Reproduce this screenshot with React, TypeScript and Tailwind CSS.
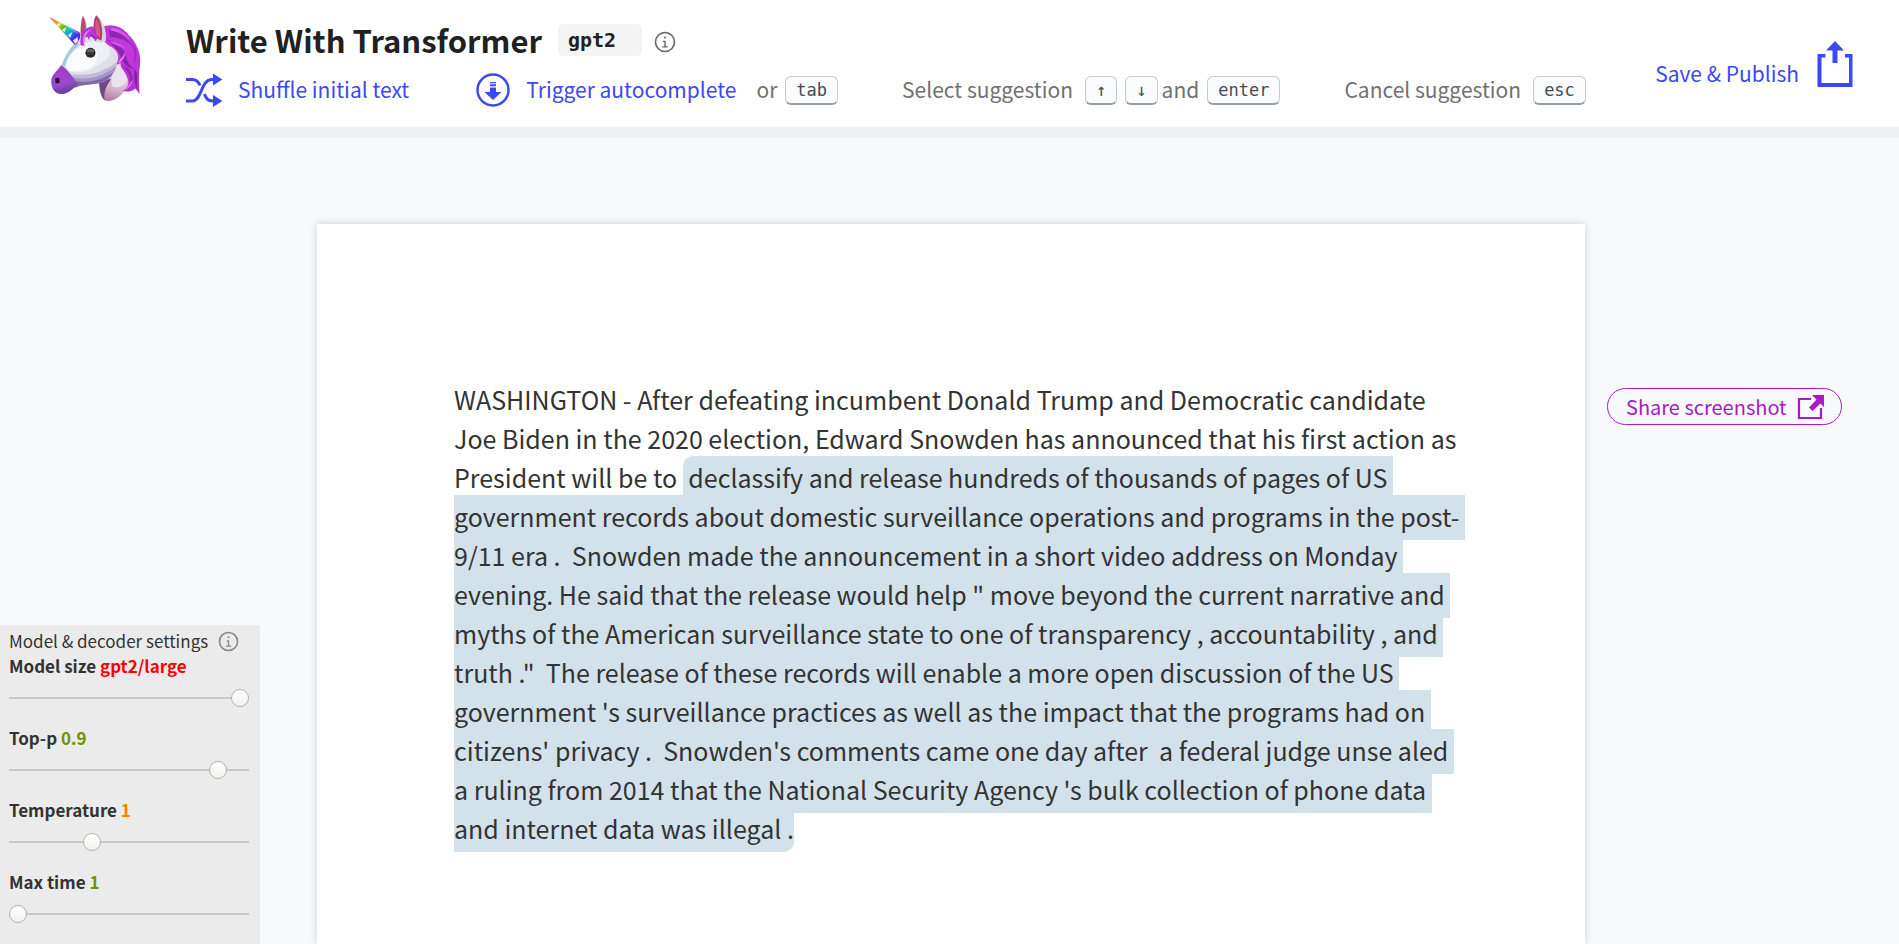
import { useState } from "react";
import type { ReactNode } from "react";

function Unicorn() {
  return (
    <svg viewBox="56 40 280 264" className="h-[89px] w-[94px]" aria-hidden="true">
      <defs>
        <linearGradient id="horn" x1="60" y1="50" x2="146" y2="128" gradientUnits="userSpaceOnUse">
          <stop offset="0" stopColor="#d8452f" />
          <stop offset="0.2" stopColor="#e8883a" />
          <stop offset="0.34" stopColor="#e3c51f" />
          <stop offset="0.46" stopColor="#4fb51f" />
          <stop offset="0.58" stopColor="#17c2b0" />
          <stop offset="0.7" stopColor="#1f8df0" />
          <stop offset="0.82" stopColor="#3a35e0" />
          <stop offset="1" stopColor="#8a12c8" />
        </linearGradient>
        <linearGradient id="neck" x1="250" y1="200" x2="230" y2="302" gradientUnits="userSpaceOnUse">
          <stop offset="0" stopColor="#dcd7e4" />
          <stop offset="0.6" stopColor="#d9b4cc" />
          <stop offset="1" stopColor="#a87a9c" />
        </linearGradient>
        <linearGradient id="mane" x1="200" y1="76" x2="325" y2="280" gradientUnits="userSpaceOnUse">
          <stop offset="0" stopColor="#b53ad8" />
          <stop offset="0.5" stopColor="#c338dc" />
          <stop offset="1" stopColor="#b02fd0" />
        </linearGradient>
        <linearGradient id="muzzle" x1="90" y1="195" x2="115" y2="284" gradientUnits="userSpaceOnUse">
          <stop offset="0" stopColor="#a437cc" />
          <stop offset="0.6" stopColor="#8f4fc4" />
          <stop offset="1" stopColor="#6a3a9c" />
        </linearGradient>
      </defs>
      <path d="M208 236C208 262 212 288 224 299C238 305 262 300 282 274C300 262 312 235 300 205L262 172Z" fill="url(#neck)" />
      <path d="M208 240C209 266 213 290 225 299C221 280 226 262 244 236Z" fill="#6d4a86" />
      <path d="M262 190C250 210 240 232 246 258C262 268 284 258 293 240C290 220 278 204 272 190Z" fill="#e9e2ef" stroke="#c9bfd2" strokeWidth="1.5" />
      <path d="M152 118C151 84 154 56 160 46C171 58 174 76 171 100Z" fill="#d9d4dd" />
      <path d="M154 112C152 84 155 60 160 49C168 62 171 80 167 104Z" fill="#bd4773" />
      <path d="M138 126C160 100 205 82 236 100C262 122 268 156 264 186C258 220 236 240 214 246C190 254 150 254 134 262C104 284 78 276 68 254C62 236 78 214 96 194C106 168 118 146 138 126Z" fill="#dfdfe8" />
      <path d="M140 128C122 144 108 168 98 192L106 200C112 178 126 156 150 132Z" fill="#9dcbe3" />
      <path d="M112 208C106 186 118 160 142 142C160 128 206 112 226 124C238 136 246 150 240 166C230 188 196 198 184 210C160 220 124 222 112 208Z" fill="#eef0f5" stroke="#d2d4de" strokeWidth="1.5" />
      <path d="M110 200C108 180 124 158 144 148C166 136 196 140 202 154C206 174 198 196 180 204C150 214 118 218 110 200Z" fill="#fafbfd" />
      <path d="M130 222C162 228 206 220 222 208C240 202 254 192 262 184C260 218 238 240 212 247C186 254 152 252 136 262C130 250 128 234 130 222Z" fill="#c3bad8" />
      <path d="M132 232C164 238 206 232 226 218C242 212 252 204 259 198C252 226 232 242 212 247C186 253 152 252 136 262Z" fill="#a795c6" />
      <path d="M134 243C166 247 206 242 226 229C236 226 244 222 250 217C242 234 228 243 212 247C186 253 152 252 136 262Z" fill="#8267ab" />
      <path d="M96 194C110 206 132 228 144 252C130 266 110 286 90 280C72 276 64 258 66 238C68 222 82 214 96 194Z" fill="url(#muzzle)" />
      <path d="M94 206C104 216 116 232 122 244C110 258 90 262 74 250C70 232 82 222 94 206Z" fill="#ac43d0" opacity=".6" />
      <path d="M72 262C90 274 118 266 142 250C130 266 112 284 94 280C82 280 75 272 72 262Z" fill="#6c43a3" opacity=".65" />
      <rect x="78" y="233" width="12" height="16" rx="4" fill="#25042f" />
      <circle cx="182.500" cy="158" r="15" fill="#242423" />
      <path d="M172 150Q182 142 193 150V157H172Z" fill="#62625e" />
      <path d="M173 160H193V164H173Z" fill="#464642" />
      <path d="M216 82C244 68 276 78 296 104C322 130 334 160 330 196C326 220 326 244 329 281L316 264C304 276 290 274 278 272C296 262 300 246 290 226C282 208 270 204 272 188C264 196 258 194 262 186C270 166 262 150 240 138C222 128 214 110 216 82Z" fill="url(#mane)" />
      <path d="M236 88C262 96 290 106 304 136C286 118 262 112 242 112Z" fill="#9426b4" />
      <path d="M230 118C256 128 280 138 288 168C292 186 302 198 314 206C294 204 278 190 274 172C266 150 248 136 230 118Z" fill="#8c23ae" />
      <path d="M294 120C314 142 318 170 310 192C324 176 322 152 312 134Z" fill="#a12bc2" />
      <path d="M272 190C292 208 306 228 300 256C314 240 308 218 294 204Z" fill="#8f25b0" />
      <path d="M314 206C328 220 320 244 322 266C312 250 312 226 314 206Z" fill="#8622a8" />
      <path d="M262 190C276 184 286 172 286 156C280 170 272 176 262 190Z" fill="#e28cf0" />
      <path d="M282 270C298 264 308 250 308 236C300 254 292 260 282 270Z" fill="#dc7cf0" />
      <path d="M244 84C268 84 288 100 298 118C280 100 262 94 244 92Z" fill="#d75fee" />
      <path d="M238 124C258 124 276 132 286 146C270 138 254 134 238 124Z" fill="#d656ec" />
      <path d="M198 124C188 96 188 62 200 45C218 58 232 90 228 122L214 128Z" fill="#d6d6dc" />
      <path d="M194 106C190 82 191 58 200 47C214 60 222 92 215 121C207 120 198 114 194 106Z" fill="#b53a67" />
      <path d="M200 104C195 84 196 66 201 56C210 70 214 94 210 114Z" fill="#cf5c80" />
      <path d="M153 134C150 108 160 86 184 80C190 78 196 84 194 96C204 104 204 118 198 124C190 112 184 108 180 112C178 124 178 122 174 110C160 112 158 126 166 136C160 136 156 138 153 134Z" fill="#b436d8" />
      <path d="M160 124C160 102 170 90 186 88C172 96 166 106 166 128Z" fill="#e083f2" />
      <path d="M182 102C194 106 200 114 199 122C194 112 188 108 182 102Z" fill="#8a20ac" />
      <path d="M60 51L149 96C156 106 150 126 136 135Z" fill="url(#horn)" />
      <path d="M82 72L94 70L88 80ZM97 89L111 81L105 97ZM115 106L129 95L122 114ZM130 121L144 111L146 123L137 132Z" fill="#ffffff" opacity=".85" />
      <path d="M60 51L149 96L146 103Z" fill="#ffffff" opacity=".22" />
    </svg>
  );
}

function InfoIcon({ className }: { className: string }) {
  return (
    <svg viewBox="0 0 32 32" fill="currentColor" className={className} aria-hidden="true">
      <path d="M17 22v-8h-4v2h2v6h-3v2h8v-2zM16 8a1.500 1.500 0 1 0 0 3 1.500 1.500 0 0 0 0-3z" />
      <path d="M16 31a15 15 0 1 1 15-15 15 15 0 0 1-15 15zm0-27.600A12.600 12.600 0 1 0 28.600 16 12.600 12.600 0 0 0 16 3.400z" />
    </svg>
  );
}

function ShuffleIcon() {
  return (
    <svg viewBox="0 0 36 34" fill="none" stroke="currentColor" strokeWidth="3" className="h-[34px] w-9" aria-hidden="true">
      <path d="M0 6.500h6c4 0 6.500 2 8 6M0 28h6.500C16 28 14.500 6.500 26 6.500h2M18.500 21c1.500 5 4 7 8 7h2" />
      <path d="M27 0.500L36.500 6.500L27 12.500zM27 22L36.500 28L27 34z" fill="currentColor" stroke="none" />
    </svg>
  );
}

function AutocompleteIcon() {
  return (
    <svg viewBox="0 0 34 34" className="size-[34px]" aria-hidden="true">
      <circle cx="17" cy="17" r="15.500" fill="none" stroke="currentColor" strokeWidth="2.500" />
      <path d="M14 9h6v1.300h-6zM14 11.300h6v2h-6zM14 14.500h6v4.500h5.500L17 27l-8.500-8H14z" fill="currentColor" />
    </svg>
  );
}

function PublishIcon() {
  return (
    <svg viewBox="0 0 36 46" fill="currentColor" className="h-[46px] w-9" aria-hidden="true">
      <path d="M18 0L27 9.500H20.500V22H15.500V9.500H9zM0.500 13H8.500V16.500H4.500V42H32V16.500H28V13H35.500V46H0.500z" />
    </svg>
  );
}

function ShareIcon() {
  return (
    <svg viewBox="0 0 28 26" className="h-[26px] w-7" aria-hidden="true">
      <path d="M14 5H2V24H24V14" fill="none" stroke="currentColor" strokeWidth="2.200" />
      <path d="M15 1H27V13L23.500 9.500L15.500 17L12 13.500L19.500 5.500z" fill="currentColor" />
    </svg>
  );
}

function Key({ children }: { children: ReactNode }) {
  return (
    <kbd className="rounded-md border border-b-2 border-[#c6cbd1] border-b-[#959da5] bg-[#fafbfc] px-2.5 font-['DejaVu_Sans_Mono',monospace] text-[17px] leading-[26px] text-[#444d56]">
      {children}
    </kbd>
  );
}

interface SettingProps {
  id: string;
  label: string;
  min: number;
  max: number;
  step: number;
  initial: number;
  color: string;
  display?: string;
}

function Setting({ id, label, min, max, step, initial, color, display }: SettingProps) {
  const [value, setValue] = useState(initial);
  return (
    <div className="flex h-[72px] flex-col gap-2.5">
      <label htmlFor={id} className="font-bold leading-6">
        {label} <span className={color}>{display ?? value}</span>
      </label>
      <input
        id={id}
        type="range"
        min={min}
        max={max}
        step={step}
        value={value}
        onChange={(e) => setValue(Number(e.target.value))}
        className="h-5 w-full appearance-none bg-transparent [&::-webkit-slider-runnable-track]:h-[2px] [&::-webkit-slider-runnable-track]:bg-[#cbc7c2] [&::-webkit-slider-thumb]:-mt-2 [&::-webkit-slider-thumb]:size-[18px] [&::-webkit-slider-thumb]:appearance-none [&::-webkit-slider-thumb]:rounded-full [&::-webkit-slider-thumb]:border [&::-webkit-slider-thumb]:border-[#b9b2aa] [&::-webkit-slider-thumb]:bg-linear-to-b [&::-webkit-slider-thumb]:from-white [&::-webkit-slider-thumb]:to-[#f2f1f0]"
      />
    </div>
  );
}

const prompt =
  "WASHINGTON - After defeating incumbent Donald Trump and Democratic candidate Joe Biden in the 2020 election, Edward Snowden has announced that his first action as President will be to ";

const generated =
  " declassify and release hundreds of thousands of pages of US government records about domestic surveillance operations and programs in the post- 9/11 era .  Snowden made the announcement in a short video address on Monday evening. He said that the release would help \" move beyond the current narrative and myths of the American surveillance state to one of transparency , accountability , and truth .\"  The release of these records will enable a more open discussion of the US government 's surveillance practices as well as the impact that the programs had on citizens' privacy .  Snowden's comments came one day after  a federal judge unse aled a ruling from 2014 that the National Security Agency 's bulk collection of phone data and internet data was illegal .";

export default function App() {
  return (
    <div className="flex min-h-screen flex-col bg-[#f8f9fb] font-['Source_Sans_Pro','Noto_Sans_CJK_SC',sans-serif] text-[#333]">
      <header className="flex items-start border-b-[11px] border-[#eff0f2] bg-white pr-[46px] pl-12">
        <a href="#home" aria-label="Home" className="mt-[13px] shrink-0">
          <Unicorn />
        </a>
        <div className="ml-11 flex h-[127px] flex-col pt-[18px]">
          <div className="flex items-center">
            <h1 className="text-[31px] leading-[44px] font-semibold text-[#212121]">Write With Transformer</h1>
            <span className="ml-4 rounded-md bg-[#f4f4f4] pr-[26px] pl-2.5 font-['DejaVu_Sans_Mono',monospace] text-xl leading-8 font-bold text-[#212121]">
              gpt2
            </span>
            <a href="#about" aria-label="About the model" className="ml-3 pt-1 text-[#666]">
              <InfoIcon className="size-[22px]" />
            </a>
          </div>
          <div className="mt-2.5 flex h-9 items-center text-[21px] whitespace-nowrap text-[#717171]">
            <button type="button" className="flex items-center gap-4 text-[#3b48f5]">
              <ShuffleIcon />
              Shuffle initial text
            </button>
            <button type="button" className="ml-[67px] flex items-center gap-4 text-[#3b48f5]">
              <AutocompleteIcon />
              Trigger autocomplete
            </button>
            <span className="mr-2 ml-5">or</span>
            <Key>tab</Key>
            <span className="mr-3 ml-16">Select suggestion</span>
            <Key>↑</Key>
            <span className="w-2" />
            <Key>↓</Key>
            <span className="mr-2 ml-1">and</span>
            <Key>enter</Key>
            <span className="mr-3 ml-16">Cancel suggestion</span>
            <Key>esc</Key>
          </div>
        </div>
        <button type="button" className="mt-[38px] ml-auto flex items-center gap-[18px] text-[21px] whitespace-nowrap text-[#3b48f5]">
          <span className="pt-5">Save &amp; Publish</span>
          <PublishIcon />
        </button>
      </header>

      <div className="grid grow grid-cols-[317px_minmax(0,1fr)_314px]">
        <aside className="w-[260px] self-end bg-[#ebebeb] pt-[3px] pr-[11px] pb-0.5 pl-[9px] text-[17px]">
          <div className="flex items-center gap-2.5 leading-[26px]">
            <h2>Model &amp; decoder settings</h2>
            <a href="#settings" aria-label="About the settings" className="text-[#888]">
              <InfoIcon className="size-[21px]" />
            </a>
          </div>
          <Setting id="model-size" label="Model size" min={0} max={2} step={1} initial={2} color="text-[#ff0000]" display="gpt2/large" />
          <Setting id="top-p" label="Top-p" min={0} max={1} step={0.05} initial={0.9} color="text-[#6f9300]" />
          <Setting id="temperature" label="Temperature" min={0} max={3} step={0.1} initial={1} color="text-[#ff8000]" />
          <Setting id="max-time" label="Max time" min={1} max={10} step={1} initial={1} color="text-[#6f9300]" />
        </aside>

        <main className="mt-[86px] bg-white pt-[156px] pr-[118px] pb-16 pl-[137px] shadow-[0_0_8px_rgba(0,0,0,0.18)]">
          <p className="text-[25px] leading-[39px] whitespace-pre-wrap">
            {prompt}
            <span className="rounded-tl-[10px] rounded-br-[10px] bg-[#d3e1ea] pt-[3px] pb-1.5">{generated}</span>
          </p>
        </main>

        <div className="pt-[250px] pl-[22px]">
          <button type="button" className="flex h-[37px] items-center gap-2.5 rounded-full border border-[#a91ac4] pr-4 pl-[18px] text-xl whitespace-nowrap text-[#a91ac4]">
            Share screenshot
            <ShareIcon />
          </button>
        </div>
      </div>
    </div>
  );
}
